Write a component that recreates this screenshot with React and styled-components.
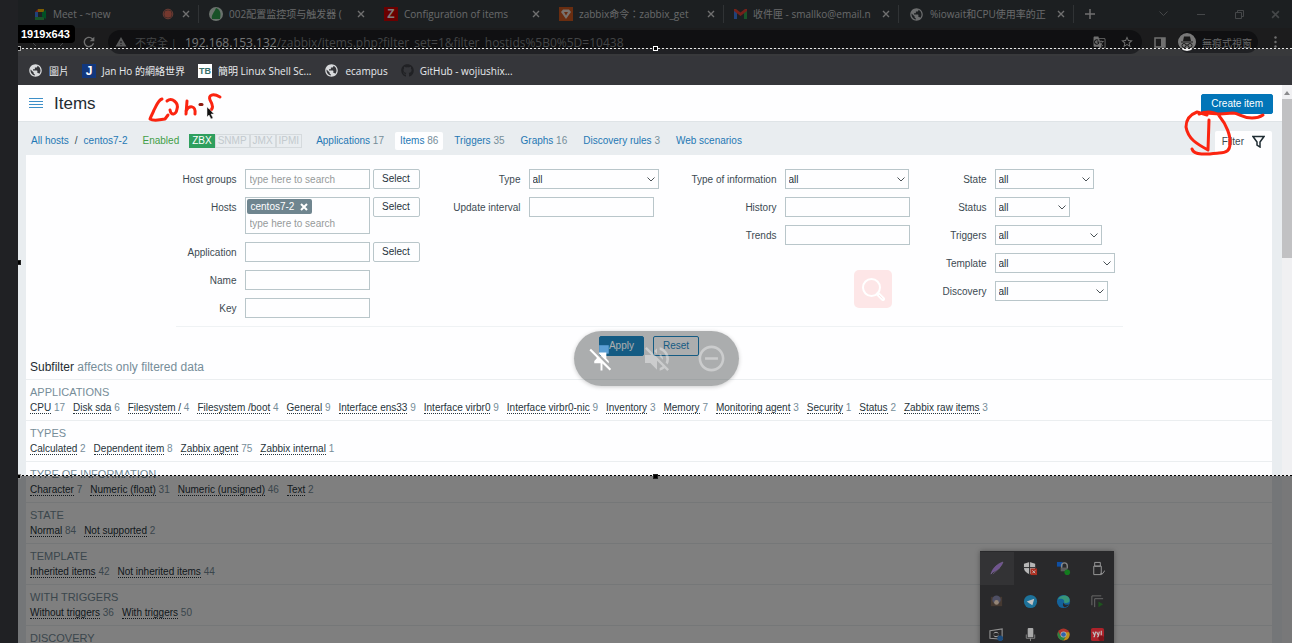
import React from "react";
import styled, { createGlobalStyle } from "styled-components";
import { MdVolumeOff, MdRemoveCircleOutline, MdPublic, MdStarBorder, MdGTranslate, MdWarning, MdRefresh } from "react-icons/md";
import { FaGithub } from "react-icons/fa";

const Global = createGlobalStyle`
  * { box-sizing: border-box; }
  html, body { margin: 0; background: #202124; }
  body, button, input, select {
    font-family: "Liberation Sans", "Noto Sans CJK TC", sans-serif;
    font-size: 10px;
  }
  button, input, select { margin: 0; border-radius: 0; }
  a { text-decoration: none; }
`;

const UI_FONT = '"Open Sans", "Noto Sans CJK TC", sans-serif';

const Shell = styled.div`
  display: flex;
  height: 100vh;
  overflow: hidden;
  padding-left: 18px;
  background: #202124;
`;

const Screen = styled.div`
  position: relative;
  flex: 1;
  min-width: 0;
  display: flex;
  flex-direction: column;
  overflow: hidden;
`;

/* ---------- browser chrome ---------- */

const TabStrip = styled.div`
  display: flex;
  align-items: center;
  flex: none;
  height: 28px;
  padding-left: 6px;
  background: #383f43;
  font-family: ${UI_FONT};
  color: #d0d2d4;
`;

const Tab = styled.div`
  display: flex;
  align-items: center;
  gap: 6px;
  flex: 0 1 175px;
  min-width: 0;
  height: 18px;
  padding: 0 6px 0 10px;
  border-right: 1px solid ${(p) => (p.$plain ? "transparent" : "#60666a")};
  svg { flex: none; }
`;

const TabTitle = styled.span`
  flex: 1;
  min-width: 0;
  white-space: nowrap;
  font-size: 10px;
  line-height: 16px;
`;

const ChromeButton = styled.button`
  display: flex;
  align-items: center;
  justify-content: center;
  flex: none;
  width: ${(p) => p.$w || 12}px;
  height: 16px;
  padding: 0;
  border: 0;
  background: none;
  color: ${(p) => (p.$faint ? "#8a8f92" : "#e0e0e0")};
`;

const Spacer = styled.div`
  flex: 1;
`;

const AddressRow = styled.div`
  display: flex;
  align-items: center;
  flex: none;
  height: 28px;
  background: #38393b;
  color: #c8cacc;
  font-family: ${UI_FONT};
`;

const NavButtons = styled.div`
  display: flex;
  width: 90px;
  padding-left: 2px;
`;

const AddressBar = styled.div`
  display: flex;
  align-items: center;
  gap: 8px;
  flex: 1;
  min-width: 0;
  height: 24px;
  padding: 0 8px 0 7px;
  border-radius: 12px;
  background: #202124;
  font-size: 12px;
  white-space: nowrap;
`;

const Url = styled.span`
  flex: 1;
  color: #86898c;
  b { font-weight: 400; color: #e4e6e8; }
`;

const Insecure = styled.span`
  font-size: 11px;
  color: #86898c;
`;

const Incognito = styled.div`
  display: flex;
  align-items: center;
  gap: 6px;
  height: 22px;
  padding-right: 6px;
  border-radius: 11px;
  background: #202124;
  font-size: 10px;
`;

const Bookmarks = styled.nav`
  display: flex;
  align-items: center;
  gap: 13px;
  flex: none;
  height: 29px;
  padding-left: 10px;
  background: #35363a;
  font-family: ${UI_FONT};
`;

const Bookmark = styled.a`
  display: flex;
  align-items: center;
  gap: 6px;
  color: #e8eaed;
  font-size: 10px;
  white-space: nowrap;
`;

const Favicon = styled.span`
  display: flex;
  align-items: center;
  justify-content: center;
  flex: none;
  width: 14px;
  height: 14px;
  background: ${(p) => p.$bg};
  color: ${(p) => p.$fg || "#fff"};
  font: bold ${(p) => p.$size || 11}px/14px "Liberation Sans", sans-serif;
`;

/* ---------- zabbix page ---------- */

const Viewport = styled.div`
  display: flex;
  flex: 1;
  min-height: 0;
`;

const Page = styled.div`
  flex: 1;
  min-width: 0;
  overflow: hidden;
  background: #e9edf0;
  color: #3c4a52;
`;

const ScrollTrack = styled.div`
  display: flex;
  flex-direction: column;
  align-items: center;
  flex: none;
  width: 10px;
  padding-top: 6px;
  background: #f0f0f2;
`;

const ScrollThumb = styled.div`
  width: 10px;
  height: 159px;
  margin-top: 4px;
  background: #c1c1c3;
`;

const PageHeader = styled.header`
  display: flex;
  align-items: center;
  gap: 11px;
  height: 37px;
  padding: 1px 9px 0 11px;
  background: #fefeff;
  border-bottom: 1px solid #dfe4e7;
`;

const Title = styled.h1`
  flex: 1;
  margin: 0;
  font-size: 17px;
  line-height: 22px;
  font-weight: 400;
  color: #1f2c33;
`;

const MenuButton = styled.button`
  display: flex;
  padding: 0;
  border: 0;
  background: none;
`;

const Button = styled.button`
  height: 20px;
  padding: 0 9px;
  border: 1px solid #0275b8;
  border-radius: 2px;
  background: ${(p) => (p.$primary ? "#0275b8" : "#fefeff")};
  color: ${(p) => (p.$primary ? "#fff" : "#0275b8")};
  line-height: 18px;
`;

const SelectButton = styled(Button)`
  width: 47px;
  padding: 0;
  border-color: #b9c6ca;
  color: #26333a;
`;

const HostNav = styled.nav`
  display: flex;
  align-items: center;
  height: 33px;
  padding: 5px 10px 0 13px;
  line-height: 18px;
`;

const Crumbs = styled.div`
  display: flex;
  gap: 6px;
  margin-right: 15px;
`;

const Link = styled.a`
  color: #1f78b4;
`;

const Enabled = styled(Link)`
  color: #429e47;
  margin-right: 10px;
`;

const Interfaces = styled.div`
  display: flex;
  margin-right: 9px;
  line-height: 12px;
`;

const Interface = styled.span`
  padding: 0 2px;
  border: 1px solid ${(p) => (p.$on ? "#2f9f5e" : "#d5dadd")};
  background: ${(p) => (p.$on ? "#2f9f5e" : "transparent")};
  color: ${(p) => (p.$on ? "#fff" : "#c3cace")};
`;

const ObjectLinks = styled.div`
  display: flex;
  flex: 1;
  gap: 6px;
`;

const ObjectLink = styled.a`
  padding: 0 5px;
  border-radius: 2px;
  background: ${(p) => (p.$active ? "#fefeff" : "transparent")};
  color: #1f78b4;
  span { color: #768d99; }
`;

const FilterTab = styled.button`
  display: flex;
  align-items: center;
  align-self: flex-end;
  gap: 8px;
  height: 24px;
  padding: 0 7px 4px;
  border: 0;
  border-radius: 2px 2px 0 0;
  background: #fefeff;
  color: #3c4a52;
`;

const Panel = styled.section`
  margin: 0 10px 0 8px;
  padding-top: 14px;
  background: #fefeff;
`;

const Form = styled.form`
  display: grid;
  grid-template-columns: 244px 239px 251px 213px;
  justify-content: center;
  height: 157px;
`;

const Column = styled.div`
  display: flex;
  flex-direction: column;
  gap: 8px;
`;

const Row = styled.div`
  display: grid;
  grid-template-columns: ${(p) => p.$label}px 1fr;
  gap: 8px;
  align-items: start;
  label { height: 20px; text-align: right; line-height: 21px; }
`;

const Controls = styled.div`
  display: flex;
  align-items: flex-start;
  gap: 3px;
`;

const TextInput = styled.input`
  width: 125px;
  height: 20px;
  padding: 0 4px;
  border: 1px solid #b9c6ca;
  background: #fefeff;
  &::placeholder { color: #969a9a; opacity: 1; }
`;

const SelectWrap = styled.div`
  display: grid;
  width: ${(p) => p.$w}px;
  align-items: center;
  justify-items: end;
  > * { grid-area: 1 / 1; }
  svg { margin-right: 4px; pointer-events: none; z-index: 1; }
`;

const SelectBox = styled.select`
  appearance: none;
  width: 100%;
  height: 20px;
  padding: 0 3px;
  border: 1px solid #b9c6ca;
  background: #fefeff;
  color: #26333a;
`;

const MultiBox = styled.div`
  width: 125px;
  height: 37px;
  padding: 1px;
  border: 1px solid #b9c6ca;
  input { width: 100%; height: 18px; padding: 0 3px; border: 0; }
`;

const Chip = styled.span`
  display: inline-flex;
  align-items: center;
  gap: 6px;
  height: 15px;
  padding: 0 4px;
  border-radius: 2px;
  background: #6f858f;
  color: #fff;
  vertical-align: top;
  button { display: flex; padding: 0; border: 0; background: none; }
`;

const FormActions = styled.div`
  display: flex;
  justify-content: center;
  gap: 9px;
  width: 947px;
  max-width: 100%;
  margin: 0 auto;
  padding-top: 9px;
  border-top: 1px solid #eff2f4;
`;

const SubfilterTitle = styled.h2`
  margin: 0;
  padding-left: 4px;
  height: 23px;
  font-size: 12px;
  font-weight: 400;
  line-height: 22px;
  color: #768d99;
  span { color: #1f2c33; }
`;

const Section = styled.section`
  height: 41px;
  padding: 5px 4px 0;
  border-top: 1px solid #ebeef0;
`;

const SectionTitle = styled.h3`
  margin: 0;
  font-size: 11px;
  font-weight: 400;
  line-height: 14px;
  color: #768d99;
`;

const Options = styled.div`
  display: flex;
  gap: 8px;
  line-height: 18px;
  white-space: nowrap;
  color: #768d99;
  a { color: #26333a; border-bottom: 1px dotted #26333a; }
`;

/* ---------- things floating over the page ---------- */

const Ink = styled.svg`
  position: absolute;
  top: ${(p) => p.$top}px;
  left: ${(p) => p.$left};
  right: ${(p) => p.$right};
  fill: none;
  stroke: #fb2410;
  stroke-width: 3;
  stroke-linecap: round;
  stroke-linejoin: round;
`;

const SearchBadge = styled.button`
  position: absolute;
  top: 270px;
  right: 400px;
  display: flex;
  align-items: center;
  justify-content: center;
  width: 38px;
  height: 38px;
  padding: 0;
  border: 0;
  border-radius: 5px;
  background: #fde6e7;
`;

const Capture = styled.div`
  position: absolute;
  inset: 0;
  display: flex;
  flex-direction: column;
  pointer-events: none;
`;

const Shade = styled.div`
  flex: ${(p) => (p.$h ? `0 0 ${p.$h}px` : "1")};
  background: rgba(0, 0, 0, 0.5);
`;

const Frame = styled.div`
  position: relative;
  flex: 0 0 428px;
  display: flex;
  flex-direction: column;
  justify-content: space-between;
`;

const Dashes = styled.div`
  height: 1px;
  background: repeating-linear-gradient(90deg, ${(p) => p.$a} 0 2px, ${(p) => p.$b} 2px 4px);
`;

const Handle = styled.span`
  position: absolute;
  width: 5px;
  height: 5px;
  margin: -2px;
  border: 1px solid ${(p) => p.$line};
  background: #000;
  top: ${(p) => p.$y};
  left: ${(p) => p.$x};
`;

const SizeLabel = styled.span`
  position: absolute;
  top: 25px;
  left: 0;
  padding: 0 5px 0 3px;
  border-radius: 0 4px 4px 0;
  background: #000;
  color: #fff;
  font-size: 11px;
  font-weight: 700;
  line-height: 18px;
`;

const CallPill = styled.div`
  position: absolute;
  top: 331px;
  left: 50%;
  display: flex;
  width: 165px;
  height: 55px;
  margin-left: -81px;
  border-radius: 28px;
  background: rgba(48, 52, 52, 0.4);
  box-shadow: 0 1px 4px rgba(0, 0, 0, 0.2);
`;

const PillButton = styled.button`
  display: flex;
  align-items: center;
  justify-content: center;
  flex: 1;
  padding: 0;
  border: 0;
  background: none;
  color: ${(p) => (p.$on ? "#fff" : "rgba(255, 255, 255, 0.38)")};
`;

const Tray = styled.div`
  position: absolute;
  top: 551px;
  right: 178px;
  display: grid;
  grid-template-columns: repeat(4, 1fr);
  grid-auto-rows: 33px;
  width: 134px;
  padding-top: 1px;
  background: #29292b;
  box-shadow: 0 0 5px rgba(0, 0, 0, 0.35);
`;

const TrayCell = styled.button`
  display: flex;
  align-items: center;
  justify-content: center;
  padding: 0;
  border: 0;
  background: ${(p) => (p.$hover ? "#333335" : "none")};
  svg { opacity: 0.85; }
`;

/* ---------- small drawings ---------- */

const Cross = ({ size = 8 }) => (
  <svg width={size} height={size} viewBox="0 0 8 8" stroke="currentColor" strokeWidth="1.4">
    <path d="M1 1l6 6M7 1L1 7" />
  </svg>
);

const Chevron = () => (
  <svg width="8" height="5" viewBox="0 0 8 5" fill="none" stroke="#4a5257" strokeWidth="1">
    <path d="M.5.500l3.500 3.500L7.500.500" />
  </svg>
);

const Globe = () => <MdPublic size={15} color="#d8dadc" />;

const MeetIcon = () => (
  <svg width="13" height="13" viewBox="0 0 13 13">
    <path d="M1 4l3-3v3z" fill="#ea4335" />
    <path d="M4 1h6v3H4z" fill="#fbbc04" />
    <path d="M1 4h3v5H1z" fill="#4285f4" />
    <path d="M1 9h9v3H1z" fill="#34a853" />
    <path d="M8 4.500l4-2.500v9l-4-2.500z" fill="#00a04a" />
  </svg>
);

const RecordIcon = () => (
  <svg width="12" height="12" viewBox="0 0 12 12">
    <circle cx="6" cy="6" r="4.800" fill="none" stroke="#e07a68" />
    <circle cx="6" cy="6" r="3.800" fill="#e8705c" />
  </svg>
);

const LeafIcon = () => (
  <svg width="14" height="14" viewBox="0 0 14 14">
    <circle cx="7" cy="7" r="7" fill="#d5e5da" />
    <path d="M7 1c5 2 5 6 4 11H3c-1-4 2-6 4-11z" fill="#2fa24f" />
  </svg>
);

const BraveIcon = () => (
  <svg width="14" height="14" viewBox="0 0 14 14">
    <path d="M0 0h14v14H0z" fill="#d35a20" />
    <path d="M4 2.500h6l2 2.500-5 7-5-7z" fill="#f0e4dc" />
    <path d="M5 5h4L7 8.500z" fill="#d35a20" />
  </svg>
);

const MailIcon = () => (
  <svg width="13" height="10" viewBox="0 0 13 10">
    <path d="M0 1h3v9H0z" fill="#4285f4" />
    <path d="M10 1h3v9h-3z" fill="#34a853" />
    <path d="M0 0h2l4.500 3.500L11 0h2v2L6.500 7 0 2z" fill="#ea4335" />
  </svg>
);

const IncognitoIcon = () => (
  <svg width="18" height="18" viewBox="0 0 18 18">
    <circle cx="9" cy="9" r="9" fill="#f1f1f1" />
    <path d="M6 3.500h6l1 4.500H5zM3 8.500h12v1H3z" fill="#333" />
    <g fill="none" stroke="#333"><circle cx="6" cy="12.500" r="2" /><circle cx="12" cy="12.500" r="2" /><path d="M8 12h2" /></g>
  </svg>
);

const trayIcons = [
  ["Feather", <path d="M2 14C4 7 9 3 15 1c-2 6-7 9-11 11zM4 14l8-7" fill="#7b5aa0" stroke="#927ab0" strokeWidth=".5" />],
  ["Security", <g><path d="M1 3l6-2 6 2v4c0 4-3 6-6 7-3-1-6-3-6-7z" fill="#d0d0d0" /><path d="M7 1v13M1 7h12" stroke="#29292b" /><path d="M8 8h7v7H8z" fill="#c4301f" /><path d="M10 10l3 3m0-3l-3 3" stroke="#ddd" /></g>],
  ["VPN", <g><path d="M1 1h6v5H1z" fill="#0b56b8" /><path d="M6 8V5a3 3 0 016 0v3" fill="none" stroke="#999" strokeWidth="1.500" /><path d="M5 7h7v4H5z" fill="#666" /><circle cx="12" cy="12" r="3" fill="#108a1c" /></g>],
  ["USB", <g fill="none" stroke="#b0b0b0"><path d="M5 1.500h6v4H5zM4 5.500h8v9H4zM11 13l2 1 3-4" /></g>],
  ["Camera", <g><path d="M2 3h12v10H2z" fill="#4a3c33" /><circle cx="8" cy="6" r="4.500" fill="#55566e" /><circle cx="8" cy="9" r="2.500" fill="#a89684" /></g>],
  ["Telegram", <g><circle cx="8" cy="8" r="7" fill="#1b7fae" /><path d="M4 8l8-3-2 7-3-2z" fill="#ddd" /></g>],
  ["Edge", <g><circle cx="8" cy="8" r="7" fill="#116cae" /><path d="M2 6c2-6 13-6 12.500 1-.5 3-4 3-6 2C10 6 5 4 2 6z" fill="#3aa887" /><path d="M8 9c1 3 4 3 6 2-1 2-3 3-5 3-2-1-2-3-1-5z" fill="#29292b" /></g>],
  ["Remote", <g><path d="M2 12V2h10M5 14V5h9" fill="none" stroke="#777" /><path d="M9 8l5 3-5 3z" fill="#1d5c1d" /></g>],
  ["Update", <g><path d="M1 4l13-2v11L1 12z" fill="none" stroke="#a5a5a5" strokeWidth="1.200" /><path d="M5 7a3 3 0 015 0M10 9a3 3 0 01-5 0" fill="none" stroke="#ccc" /><circle cx="12" cy="12" r="3" fill="#1b538c" /></g>],
  ["Microphone", <g><rect x="5" y="1" width="6" height="10" rx="1" fill="#c0c0c0" /><path d="M3.500 8v4h9V8M8 12v3" fill="none" stroke="#999" /></g>],
  ["Chrome", <g><circle cx="8" cy="8" r="6.500" fill="#c7372b" /><path d="M2.400 4.800A6.500 6.500 0 008 14.500l3-5H5z" fill="#2c9447" /><path d="M14 5.500A6.500 6.500 0 018 14.500l3-5-1-4z" fill="#d6a51a" /><circle cx="8" cy="8" r="3.200" fill="#ccc" /><circle cx="8" cy="8" r="2.500" fill="#2f6fc6" /></g>],
  ["YY", <g><rect x="1" y="1" width="14" height="14" rx="2" fill="#c3212a" /><path d="M3 5l2 4 1-4M5 9l-1 2M7 5l2 4 1-4M9 9l-1 2M12 4v5" fill="none" stroke="#ddd" strokeWidth="1.200" /><circle cx="12" cy="12" r="3" fill="#8c1018" /></g>],
];

/* ---------- data ---------- */

const tabs = [
  { icon: <MeetIcon />, title: "Meet - ~new", extra: <RecordIcon /> },
  { icon: <LeafIcon />, title: "002配置监控项与触发器 (", plain: true },
  { icon: <Favicon $bg="#d40000" $size={12}>Z</Favicon>, title: "Configuration of items", plain: true },
  { icon: <BraveIcon />, title: "zabbix命令：zabbix_get" },
  { icon: <MailIcon />, title: "收件匣 - smallko@email.n" },
  { icon: <Globe />, title: "%iowait和CPU使用率的正" },
];

const bookmarks = [
  [<Globe />, "圖片"],
  [<Favicon $bg="#12387e" $size={12}>J</Favicon>, "Jan Ho 的網絡世界"],
  [<Favicon $bg="#fff" $fg="#37706a" $size={9}>TB</Favicon>, "簡明 Linux Shell Sc..."],
  [<Globe />, "ecampus"],
  [<FaGithub size={13} color="#202124" />, "GitHub - wojiushix..."],
];

const objects = [["Applications", "17"], ["Items", "86"], ["Triggers", "35"], ["Graphs", "16"], ["Discovery rules", "3"], ["Web scenarios", ""]];

const subfilters = [
  ["APPLICATIONS", [["CPU", 17], ["Disk sda", 6], ["Filesystem /", 4], ["Filesystem /boot", 4], ["General", 9], ["Interface ens33", 9], ["Interface virbr0", 9], ["Interface virbr0-nic", 9], ["Inventory", 3], ["Memory", 7], ["Monitoring agent", 3], ["Security", 1], ["Status", 2], ["Zabbix raw items", 3]]],
  ["TYPES", [["Calculated", 2], ["Dependent item", 8], ["Zabbix agent", 75], ["Zabbix internal", 1]]],
  ["TYPE OF INFORMATION", [["Character", 7], ["Numeric (float)", 31], ["Numeric (unsigned)", 46], ["Text", 2]]],
  ["STATE", [["Normal", 84], ["Not supported", 2]]],
  ["TEMPLATE", [["Inherited items", 42], ["Not inherited items", 44]]],
  ["WITH TRIGGERS", [["Without triggers", 36], ["With triggers", 50]]],
  ["DISCOVERY", []],
];

const Field = ({ id, label, labelWidth, children }) => (
  <Row $label={labelWidth}>
    <label htmlFor={id}>{label}</label>
    <Controls>{children}</Controls>
  </Row>
);

const Dropdown = ({ id, width }) => (
  <SelectWrap $w={width}>
    <SelectBox id={id} defaultValue="all"><option value="all">all</option></SelectBox>
    <Chevron />
  </SelectWrap>
);

function BrowserChrome() {
  return (
    <>
      <TabStrip>
        {tabs.map((t) => (
          <Tab key={t.title} $plain={t.plain}>
            {t.icon}
            <TabTitle>{t.title}</TabTitle>
            {t.extra}
            <ChromeButton aria-label="Close tab"><Cross /></ChromeButton>
          </Tab>
        ))}
        <ChromeButton $w={32} aria-label="New tab">
          <svg width="10" height="10" stroke="currentColor" strokeWidth="1.500"><path d="M5 0v10M0 5h10" /></svg>
        </ChromeButton>
        <Spacer />
        <ChromeButton $w={38} $faint aria-label="Search tabs"><svg width="9" height="6" fill="none" stroke="currentColor"><path d="M.5.500l4 4 4-4" /></svg></ChromeButton>
        <ChromeButton $w={38} $faint aria-label="Minimize"><svg width="8" height="1"><path d="M0 0h8v1H0z" fill="currentColor" /></svg></ChromeButton>
        <ChromeButton $w={38} $faint aria-label="Restore"><svg width="9" height="9" fill="none" stroke="currentColor"><path d="M.5 2.500h6v6h-6zM2.500 2.500v-2h6v6h-2" /></svg></ChromeButton>
        <ChromeButton $w={34} $faint aria-label="Close window"><Cross size={9} /></ChromeButton>
      </TabStrip>
      <AddressRow>
        <NavButtons>
          <ChromeButton $w={28} $faint aria-label="Back"><svg width="8" height="10" fill="none" stroke="currentColor"><path d="M6 1L2 5l4 4" /></svg></ChromeButton>
          <ChromeButton $w={28} $faint aria-label="Forward"><svg width="8" height="10" fill="none" stroke="currentColor"><path d="M2 1l4 4-4 4" /></svg></ChromeButton>
          <ChromeButton $w={26} aria-label="Reload"><MdRefresh size={16} /></ChromeButton>
        </NavButtons>
        <AddressBar>
          <MdWarning size={12} color="#b0b2b4" />
          <Insecure>不安全 |</Insecure>
          <Url><b>192.168.153.132</b>/zabbix/items.php?filter_set=1&amp;filter_hostids%5B0%5D=10438</Url>
          <ChromeButton $w={26} aria-label="Translate"><MdGTranslate size={13} /></ChromeButton>
          <ChromeButton $w={14} aria-label="Bookmark"><MdStarBorder size={14} /></ChromeButton>
        </AddressBar>
        <ChromeButton $w={36} aria-label="Side panel">
          <svg width="12" height="11"><path d="M1 1h10v9H1z" fill="none" stroke="currentColor" strokeWidth="1.500" /><path d="M7 1h4v9H7z" fill="currentColor" /></svg>
        </ChromeButton>
        <Incognito><IncognitoIcon />無痕式視窗</Incognito>
        <ChromeButton $w={34} aria-label="Menu">
          <svg width="3" height="12" fill="currentColor"><circle cx="1.500" cy="1.500" r="1.200" /><circle cx="1.500" cy="6" r="1.200" /><circle cx="1.500" cy="10.500" r="1.200" /></svg>
        </ChromeButton>
      </AddressRow>
      <Bookmarks>
        {bookmarks.map(([icon, text]) => (
          <Bookmark key={text} href="#">{icon}{text}</Bookmark>
        ))}
      </Bookmarks>
    </>
  );
}

function FilterForm() {
  return (
    <>
      <Form id="filter">
        <Column>
          <Field id="groups" label="Host groups" labelWidth={61}>
            <TextInput id="groups" placeholder="type here to search" />
            <SelectButton type="button">Select</SelectButton>
          </Field>
          <Field id="hosts" label="Hosts" labelWidth={61}>
            <MultiBox>
              <Chip>centos7-2 <button type="button" aria-label="Remove"><svg width="8" height="8" stroke="#fff" strokeWidth="2"><path d="M1 1l6 6M7 1L1 7" /></svg></button></Chip>
              <TextInput id="hosts" placeholder="type here to search" />
            </MultiBox>
            <SelectButton type="button">Select</SelectButton>
          </Field>
          <Field id="application" label="Application" labelWidth={61}>
            <TextInput id="application" />
            <SelectButton type="button">Select</SelectButton>
          </Field>
          <Field id="name" label="Name" labelWidth={61}><TextInput id="name" /></Field>
          <Field id="key" label="Key" labelWidth={61}><TextInput id="key" /></Field>
        </Column>
        <Column>
          <Field id="type" label="Type" labelWidth={101}><Dropdown id="type" width={130} /></Field>
          <Field id="interval" label="Update interval" labelWidth={101}><TextInput id="interval" /></Field>
        </Column>
        <Column>
          <Field id="info" label="Type of information" labelWidth={118}><Dropdown id="info" width={124} /></Field>
          <Field id="history" label="History" labelWidth={118}><TextInput id="history" /></Field>
          <Field id="trends" label="Trends" labelWidth={118}><TextInput id="trends" /></Field>
        </Column>
        <Column>
          <Field id="state" label="State" labelWidth={77}><Dropdown id="state" width={99} /></Field>
          <Field id="status" label="Status" labelWidth={77}><Dropdown id="status" width={75} /></Field>
          <Field id="triggers" label="Triggers" labelWidth={77}><Dropdown id="triggers" width={107} /></Field>
          <Field id="template" label="Template" labelWidth={77}><Dropdown id="template" width={120} /></Field>
          <Field id="discovery" label="Discovery" labelWidth={77}><Dropdown id="discovery" width={113} /></Field>
        </Column>
      </Form>
      <FormActions>
        <Button form="filter" type="button" $primary>Apply</Button>
        <Button form="filter" type="button">Reset</Button>
      </FormActions>
    </>
  );
}

export default function App() {
  return (
    <Shell>
      <Global />
      <Screen>
        <BrowserChrome />
        <Viewport>
          <Page>
            <PageHeader>
              <MenuButton aria-label="Menu"><svg width="14" height="11" fill="#3d8fc8"><path d="M0 0h14v1H0zM0 3h14v1H0zM0 6h14v1H0zM0 9h14v1H0z" /></svg></MenuButton>
              <Title>Items</Title>
              <Button $primary>Create item</Button>
            </PageHeader>
            <HostNav>
              <Crumbs><Link href="#">All hosts</Link><span>/</span><Link href="#">centos7-2</Link></Crumbs>
              <Enabled href="#">Enabled</Enabled>
              <Interfaces>
                <Interface $on>ZBX</Interface><Interface>SNMP</Interface><Interface>JMX</Interface><Interface>IPMI</Interface>
              </Interfaces>
              <ObjectLinks>
                {objects.map(([name, count]) => (
                  <ObjectLink key={name} href="#" $active={name === "Items"}>{name} <span>{count}</span></ObjectLink>
                ))}
              </ObjectLinks>
              <FilterTab>
                Filter
                <svg width="13" height="13" fill="none" stroke="#1f2c33" strokeWidth="1.500"><path d="M1 1.500h11L8 7v5L5 10V7z" /></svg>
              </FilterTab>
            </HostNav>
            <Panel>
              <FilterForm />
              <SubfilterTitle><span>Subfilter</span> affects only filtered data</SubfilterTitle>
              {subfilters.map(([title, options]) => (
                <Section key={title}>
                  <SectionTitle>{title}</SectionTitle>
                  <Options>
                    {options.map(([name, count]) => (
                      <span key={name}><a href="#">{name}</a> {count}</span>
                    ))}
                  </Options>
                </Section>
              ))}
            </Panel>
          </Page>
          <ScrollTrack>
            <svg width="6" height="4"><path d="M0 4l3-4 3 4z" fill="#8a8a8c" /></svg>
            <ScrollThumb />
          </ScrollTrack>
        </Viewport>

        <Ink $top={90} $left="128px" width="80" height="34" viewBox="146 90 80 34">
          <path d="M162 99C158 100 156 107 154 110C153 113 151 116 150 119C153 121 160 120 165 119L168 115M167 101C172 97 179 103 177 109C176 115 171 116 170 110M187 101L186 114M186 111C189 105 196 105 195 114M220 97C213 93 208 95 210 100C213 105 214 109 209 111" />
          <path d="M200 104.500h2" stroke="#8c1a10" />
          <path d="M207 107v10l2-2 2 4 2-1-2-4h3z" fill="#111" stroke="#eee" strokeWidth=".5" />
        </Ink>
        <Ink $top={108} $right="24px" width="86" height="50" viewBox="1182 108 86 50">
          <path d="M1207 115L1197 112C1189 115 1186 120 1186 127C1188 139 1197 144 1208 150L1209 120M1199 114C1206 111 1217 111 1220 117C1226 124 1231 136 1230 144C1230 150 1227 153 1219 153C1209 154 1194 156 1192 149M1205 113L1220 114L1233 113C1239 113 1242 118 1252 118C1257 118 1260 117 1263 115" />
        </Ink>

        <SearchBadge aria-label="Search">
          <svg width="24" height="24" fill="none" stroke="#fff" strokeWidth="2"><circle cx="10.500" cy="10.500" r="8.500" /><path d="M17 17l5 5" strokeWidth="4" strokeLinecap="round" /><path d="M18 18l3.500 3.500" stroke="#fde6e7" strokeWidth="1" /></svg>
        </SearchBadge>

        <Capture>
          <Shade $h={48} />
          <Frame>
            <Dashes $a="#e8e8e8" $b="#2a2a2a" />
            <Dashes $a="#000" $b="#e8e8e8" />
            <Handle $x="50%" $y="0" $line="#fff" />
            <Handle $x="50%" $y="100%" $line="#222" />
            <Handle $x="0" $y="0" $line="#aaa" />
            <Handle $x="0" $y="50%" $line="#222" />
            <Handle $x="0" $y="100%" $line="#888" />
          </Frame>
          <Shade />
        </Capture>
        <SizeLabel>1919x643</SizeLabel>

        <CallPill>
          <PillButton $on aria-label="Unpin">
            <svg width="29" height="29" viewBox="0 0 24 24" fill="currentColor">
              <path d="M10 1h8v7h-8z" fill="#5b9fd4" />
              <path d="M2 5.270L3.280 4 20 20.720 18.730 22l-5.930-5.930V22h-1.600v-6H6v-2l2-2v-.730zM16 12l2 2v2h-.180L10 8.180V7h6z" />
            </svg>
          </PillButton>
          <PillButton aria-label="Unmute"><MdVolumeOff size={32} /></PillButton>
          <PillButton aria-label="Remove"><MdRemoveCircleOutline size={31} /></PillButton>
        </CallPill>

        <Tray>
          {trayIcons.map(([name, drawing], i) => (
            <TrayCell key={name} aria-label={name} $hover={i === 0}>
              <svg width="15" height="15" viewBox="0 0 16 16">{drawing}</svg>
            </TrayCell>
          ))}
        </Tray>
      </Screen>
    </Shell>
  );
}
